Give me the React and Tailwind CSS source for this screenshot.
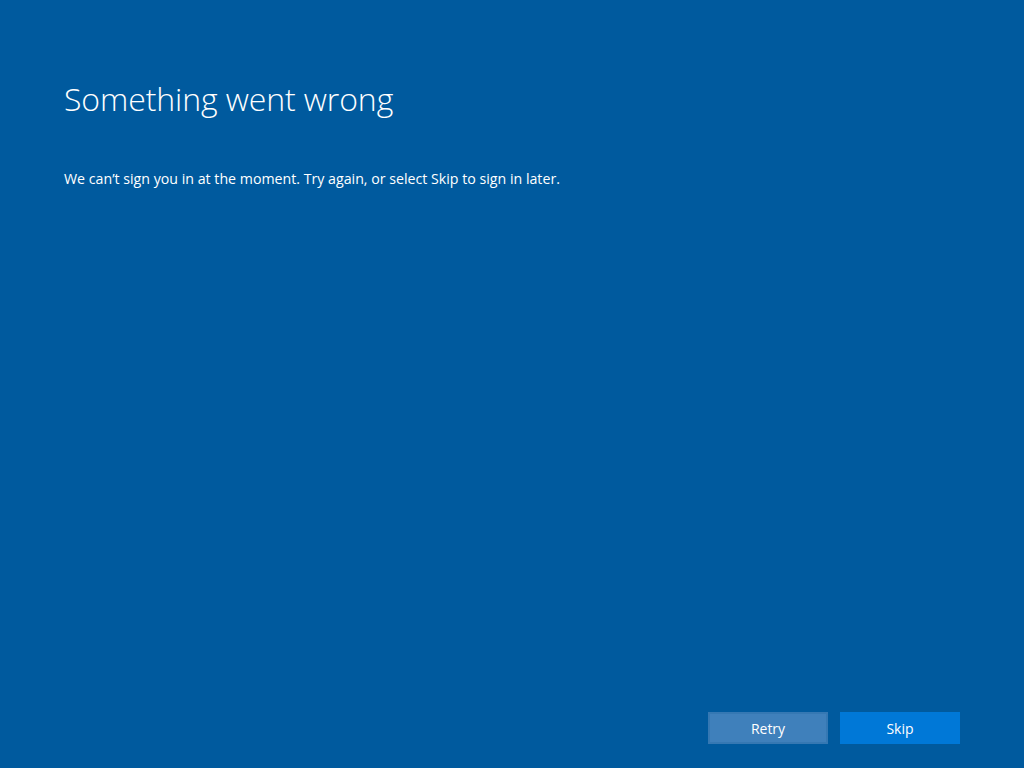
export default function App() {
    return (
        <div
            className="flex h-[768px] w-[1024px] flex-col bg-[#005a9e] px-16 pb-6 text-white"
            style={{ fontFamily: '"Open Sans", "Noto Sans", sans-serif' }}
        >
            <div className="flex-1 pt-[77px]">
                <h1 className="text-[32px] font-light leading-[44px] tracking-[-0.1px]">
                    Something went wrong
                </h1>
                <p className="mt-[48px] text-[14.2px] leading-5">
                    We can’t sign you in at the moment. Try again, or select Skip to sign in later.
                </p>
            </div>

            <div className="flex justify-end gap-3">
                <button className="h-8 w-[120px] border-2 border-[#3578b3] bg-[#3f80bb] text-[14px] text-white">
                    Retry
                </button>
                <button className="h-8 w-[120px] bg-[#0078d7] text-[14px] text-white">
                    Skip
                </button>
            </div>
        </div>
    );
}
